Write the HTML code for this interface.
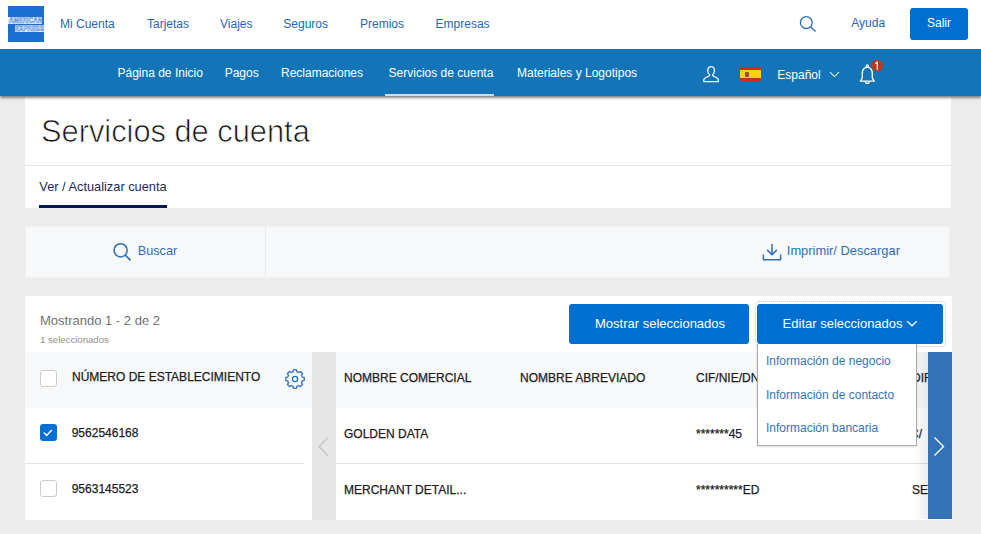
<!DOCTYPE html>
<html><head><meta charset="utf-8">
<style>
*{box-sizing:border-box;margin:0;padding:0}
html,body{width:981px;height:534px;overflow:hidden;background:#ececec;font-family:"Liberation Sans",sans-serif;position:relative}
.abs{position:absolute}
.t{position:absolute;white-space:nowrap;line-height:1}
.md{-webkit-text-stroke:0.25px currentColor}
</style></head><body>
<div class="abs" style="left:0;top:0;width:981px;height:49px;background:#fff"></div>
<div class="abs" style="left:8px;top:6px;width:36px;height:36px;background:#1a6fd0"></div>
<div class="abs" style="left:8px;top:16.8px;width:34px;height:7px;background:#e4eefa"></div>
<div class="abs" style="left:14.5px;top:25px;width:29.5px;height:6.5px;background:#e4eefa"></div>
<div class="t" style="left:8.6px;top:16.4px;font-size:8.3px;font-weight:700;color:#fff;-webkit-text-stroke:0.55px #3d7fd3;transform:scaleX(0.74);transform-origin:0 0">AMERICAN</div>
<div class="t" style="left:15.2px;top:24.4px;font-size:8.3px;font-weight:700;color:#fff;-webkit-text-stroke:0.55px #3d7fd3;transform:scaleX(0.74);transform-origin:0 0">EXPRESS</div>
<div class="t " style="left:60px;top:18.04px;font-size:12px;color:#2467b4;">Mi Cuenta</div>
<div class="t " style="left:147px;top:18.04px;font-size:12px;color:#2467b4;">Tarjetas</div>
<div class="t " style="left:220px;top:18.04px;font-size:12px;color:#2467b4;">Viajes</div>
<div class="t " style="left:283.3px;top:18.04px;font-size:12px;color:#2467b4;">Seguros</div>
<div class="t " style="left:360px;top:18.04px;font-size:12px;color:#2467b4;">Premios</div>
<div class="t " style="left:435.6px;top:18.04px;font-size:12px;color:#2467b4;">Empresas</div>
<div class="t " style="left:851.3px;top:17.44px;font-size:12px;color:#2467b4;">Ayuda</div>
<svg class="abs" style="left:799px;top:15px" width="19" height="18" viewBox="0 0 19 18"><circle cx="7.3" cy="7.6" r="5.9" fill="none" stroke="#2a6cb6" stroke-width="1.3"/><line x1="11.4" y1="11.8" x2="16.6" y2="16.4" stroke="#2a6cb6" stroke-width="1.4"/></svg>
<div class="abs" style="left:910px;top:8px;width:58px;height:32px;background:#006fcf;border-radius:3px"></div>
<div class="t " style="left:927px;top:17.34px;font-size:12px;color:#fff;">Salir</div>
<div class="abs" style="left:0;top:49px;width:981px;height:47px;background:#1374b8;box-shadow:0 1.5px 2.5px rgba(0,0,0,.45);z-index:5"></div>
<div class="abs" style="left:0;top:0;width:981px;height:0;z-index:6">
<div class="t " style="left:117.5px;top:66.74px;font-size:12px;color:#fff;">Página de Inicio</div>
<div class="t " style="left:224.7px;top:66.74px;font-size:12px;color:#fff;">Pagos</div>
<div class="t " style="left:281px;top:66.74px;font-size:12px;color:#fff;">Reclamaciones</div>
<div class="t " style="left:388.6px;top:66.74px;font-size:12px;color:#fff;">Servicios de cuenta</div>
<div class="t " style="left:517px;top:66.74px;font-size:12px;color:#fff;">Materiales y Logotipos</div>
<div class="abs" style="left:385px;top:93.5px;width:109px;height:2.5px;background:#d5dbe2"></div>
<svg class="abs" style="left:702px;top:65px" width="18" height="18" viewBox="0 0 18 18"><path d="M9.1 1.6c2 0 3.4 1.7 3.4 4 0 1.8-.8 3.3-1.9 4.1-.3.9.2 1.3 1.2 1.7 2.6.9 4.6 2 4.6 3.5v1.7H1.8v-1.7c0-1.5 2-2.6 4.6-3.5 1-.4 1.5-.8 1.2-1.7-1.1-.8-1.9-2.3-1.9-4.1 0-2.3 1.4-4 3.4-4z" fill="none" stroke="#eef4fb" stroke-width="1.35" stroke-linejoin="round"/></svg>
<div class="abs" style="left:740px;top:67px;width:21px;height:13.6px;background:#cf2a1a;border-radius:1px"></div>
<div class="abs" style="left:740px;top:70px;width:21px;height:8px;background:#f6d21c"></div>
<div class="abs" style="left:744.5px;top:72px;width:4.5px;height:4.5px;background:#9c4a2c;border-radius:1px"></div>
<div class="t " style="left:777.3px;top:68.84px;font-size:12px;color:#fff;">Español</div>
<svg class="abs" style="left:829px;top:71px" width="11" height="7" viewBox="0 0 11 7"><path d="M1 1.2 5.5 5.6 10 1.2" fill="none" stroke="#eaf2fb" stroke-width="1.1"/></svg>
<svg class="abs" style="left:857px;top:63px" width="22" height="24" viewBox="0 0 22 24"><circle cx="10.3" cy="3" r="1.1" fill="none" stroke="#fff" stroke-width="1.2"/><path d="M10.3 4.3C7 4.3 5.3 7 5.3 10.6v3.9c0 1.6-1.9 2.8-1.9 3.6h13.8c0-.8-1.9-2-1.9-3.6v-3.9c0-3.6-1.7-6.3-5-6.3z" fill="none" stroke="#fff" stroke-width="1.35" stroke-linejoin="round"/><path d="M8.4 18.4a1.9 1.9 0 0 0 3.8 0" fill="none" stroke="#fff" stroke-width="1.3"/></svg>
<div class="abs" style="left:871.2px;top:60.1px;width:11.4px;height:11.4px;border-radius:50%;background:#bb381b"></div>
<svg class="abs" style="left:871px;top:60px" width="12" height="12" viewBox="0 0 12 12"><path d="M4.2 3.6 6.3 2.2V10" fill="none" stroke="#fff" stroke-width="1.15"/></svg>
</div>
<div class="abs" style="left:25px;top:97px;width:926px;height:111px;background:#fff"></div>
<div class="t " style="left:41px;top:117.13px;font-size:30.8px;color:#151515;-webkit-text-stroke:0.7px #fff;">Servicios de cuenta</div>
<div class="abs" style="left:25px;top:165px;width:926px;height:1px;background:#e6e6e6"></div>
<div class="t " style="left:39.3px;top:180.66px;font-size:12.8px;color:#1d2a5c;">Ver / Actualizar cuenta</div>
<div class="abs" style="left:39px;top:205px;width:128px;height:3px;background:#00175a"></div>
<div class="abs" style="left:25px;top:225.5px;width:925px;height:52.5px;background:#f7f8fa;border:1px solid #eff1f3"></div>
<div class="abs" style="left:265px;top:226px;width:1px;height:51px;background:#e6e8eb"></div>
<svg class="abs" style="left:112px;top:242px" width="21" height="21" viewBox="0 0 21 21"><circle cx="8.6" cy="8.3" r="6.6" fill="none" stroke="#2d6eb4" stroke-width="1.5"/><line x1="13.3" y1="13.1" x2="18.6" y2="18.4" stroke="#2d6eb4" stroke-width="1.6"/></svg>
<div class="t " style="left:137.7px;top:244.85px;font-size:12.7px;color:#2f6fb3;">Buscar</div>
<svg class="abs" style="left:761px;top:243px" width="22" height="19" viewBox="0 0 22 19"><path d="M11 1.5v10.2M6.6 7.4l4.4 4.4 4.4-4.4M2.4 12v4.8h17.2V12" fill="none" stroke="#2d6eb4" stroke-width="1.5" stroke-linejoin="round" stroke-linecap="round"/></svg>
<div class="t " style="left:786.8px;top:245.28px;font-size:12.9px;color:#2f6fb3;">Imprimir/ Descargar</div>
<div class="abs" style="left:25px;top:296px;width:927px;height:224px;background:#fff"></div>
<div class="t " style="left:40px;top:313.90px;font-size:13px;color:#3e3e3e;-webkit-text-stroke:0.22px #fff;">Mostrando 1 - 2 de 2</div>
<div class="t " style="left:40px;top:334.97px;font-size:9.6px;color:#8f8f8f;">1 seleccionados</div>
<div class="abs" style="left:569px;top:304px;width:180px;height:40px;background:#006fcf;border-radius:3px"></div>
<div class="t " style="left:595px;top:316.90px;font-size:13px;color:#fff;">Mostrar seleccionados</div>
<div class="abs" style="left:754.5px;top:301px;width:191px;height:46px;border:1px dotted #c6c6c6;border-radius:4px"></div>
<div class="abs" style="left:757px;top:304px;width:186px;height:40px;background:#006fcf;border-radius:3px"></div>
<div class="t " style="left:782.6px;top:316.90px;font-size:13px;color:#fff;">Editar seleccionados</div>
<svg class="abs" style="left:906px;top:320px" width="12" height="7" viewBox="0 0 12 7"><path d="M1.2 1.2 6 5.8 10.8 1.2" fill="none" stroke="#fff" stroke-width="1.2"/></svg>
<div class="abs" style="left:25px;top:352px;width:287px;height:56px;background:#f7f8f9"></div>
<div class="abs" style="left:312px;top:352px;width:24px;height:168px;background:#e6e6e6"></div>
<div class="abs" style="left:336px;top:352px;width:592px;height:56px;background:#f7f8f9"></div>
<div class="abs" style="left:25px;top:463px;width:279px;height:1px;background:#e2e2e2"></div>
<div class="abs" style="left:336px;top:463px;width:592px;height:1px;background:#e2e2e2"></div>
<div class="abs" style="left:40px;top:370px;width:17px;height:17px;border:1px solid #cbcbcb;border-radius:3px;background:#fff"></div>
<div class="t md" style="left:72px;top:370.74px;font-size:12px;color:#1c1c1c;">NÚMERO DE ESTABLECIMIENTO</div>
<svg class="abs" style="left:283px;top:366.5px" width="24" height="24" viewBox="0 0 24 24"><path d="M10.06 4.76 L10.47 2.83 A9.3 9.3 0 0 1 13.53 2.83 L13.94 4.76 A7.5 7.5 0 0 1 15.75 5.50 L17.40 4.43 A9.3 9.3 0 0 1 19.57 6.60 L18.50 8.25 A7.5 7.5 0 0 1 19.24 10.06 L21.17 10.47 A9.3 9.3 0 0 1 21.17 13.53 L19.24 13.94 A7.5 7.5 0 0 1 18.50 15.75 L19.57 17.40 A9.3 9.3 0 0 1 17.40 19.57 L15.75 18.50 A7.5 7.5 0 0 1 13.94 19.24 L13.53 21.17 A9.3 9.3 0 0 1 10.47 21.17 L10.06 19.24 A7.5 7.5 0 0 1 8.25 18.50 L6.60 19.57 A9.3 9.3 0 0 1 4.43 17.40 L5.50 15.75 A7.5 7.5 0 0 1 4.76 13.94 L2.83 13.53 A9.3 9.3 0 0 1 2.83 10.47 L4.76 10.06 A7.5 7.5 0 0 1 5.50 8.25 L4.43 6.60 A9.3 9.3 0 0 1 6.60 4.43 L8.25 5.50 A7.5 7.5 0 0 1 10.06 4.76Z" fill="none" stroke="#2d6eb4" stroke-width="1.3" stroke-linejoin="round"/><circle cx="12" cy="12" r="2.6" fill="none" stroke="#2d6eb4" stroke-width="1.3"/></svg>
<div class="t md" style="left:344px;top:371.74px;font-size:12px;color:#1c1c1c;">NOMBRE COMERCIAL</div>
<div class="t md" style="left:520px;top:371.74px;font-size:12px;color:#1c1c1c;">NOMBRE ABREVIADO</div>
<div class="t md" style="left:696px;top:371.74px;font-size:12px;color:#1c1c1c;">CIF/NIE/DNI</div>
<div class="t md" style="left:912px;top:371.74px;font-size:12px;color:#1c1c1c;">DIR</div>
<div class="abs" style="left:40px;top:424px;width:17px;height:17px;border-radius:3px;background:#0a6fd0"></div>
<svg class="abs" style="left:40px;top:424px" width="17" height="17" viewBox="0 0 17 17"><path d="M3.9 8.5l2.8 2.9 5.1-5.4" fill="none" stroke="#fff" stroke-width="1.5"/></svg>
<div class="t md" style="left:71.7px;top:426.74px;font-size:12px;color:#1c1c1c;">9562546168</div>
<div class="t md" style="left:344px;top:427.84px;font-size:12px;color:#1c1c1c;">GOLDEN DATA</div>
<div class="t md" style="left:696px;top:427.84px;font-size:12px;color:#1c1c1c;">*******45</div>
<div class="t md" style="left:910px;top:427.84px;font-size:12px;color:#1c1c1c;">C/</div>
<div class="abs" style="left:40px;top:480px;width:17px;height:17px;border:1px solid #cbcbcb;border-radius:3px;background:#fff"></div>
<div class="t md" style="left:71.7px;top:482.64px;font-size:12px;color:#1c1c1c;">9563145523</div>
<div class="t md" style="left:344px;top:483.74px;font-size:12px;color:#1c1c1c;">MERCHANT DETAIL...</div>
<div class="t md" style="left:696px;top:483.74px;font-size:12px;color:#1c1c1c;">**********ED</div>
<div class="t md" style="left:912px;top:483.74px;font-size:12px;color:#1c1c1c;">SE</div>
<svg class="abs" style="left:316px;top:436px" width="14" height="21" viewBox="0 0 14 21"><path d="M11.5 2 3 10.5l8.5 8.8" fill="none" stroke="#c2c2c2" stroke-width="1.3" stroke-linecap="round"/></svg>
<div class="abs" style="left:914px;top:352px;width:14px;height:167px;background:linear-gradient(to right,rgba(0,0,0,0),rgba(0,0,0,.07))"></div>
<div class="abs" style="left:928px;top:352px;width:23.5px;height:167px;background:#3472b8"></div>
<svg class="abs" style="left:932px;top:436px" width="14" height="21" viewBox="0 0 14 21"><path d="M2.5 1.5l9 9-9 9" fill="none" stroke="#fff" stroke-width="1.4"/></svg>
<div class="abs" style="left:757px;top:344px;width:160px;height:102px;background:#fff;border:1px solid #a9a9a9;border-top:0;box-shadow:0 1px 2px rgba(0,0,0,.12)"></div>
<div class="t " style="left:766px;top:355.04px;font-size:12px;color:#3474b6;">Información de negocio</div>
<div class="t " style="left:766px;top:388.94px;font-size:12px;color:#3474b6;">Información de contacto</div>
<div class="t " style="left:766px;top:421.84px;font-size:12px;color:#3474b6;">Información bancaria</div>
</body></html>
